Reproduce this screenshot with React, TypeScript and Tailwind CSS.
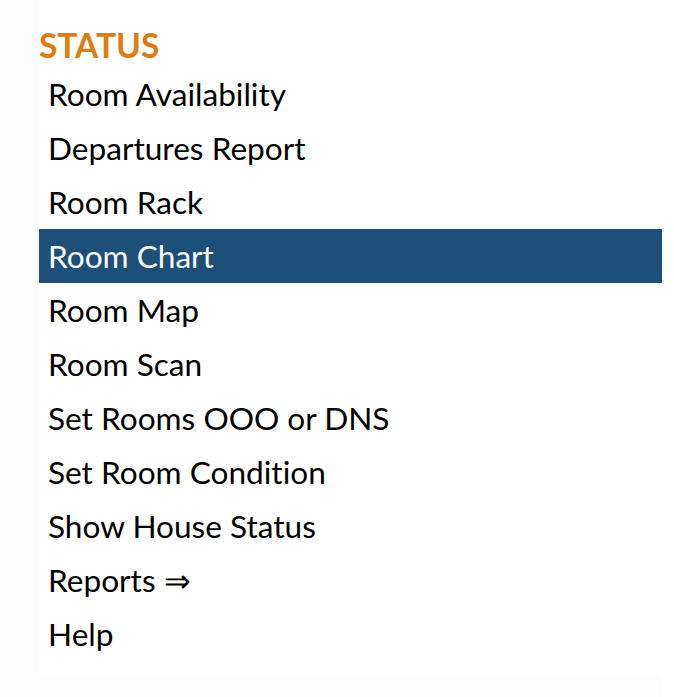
import React from 'react';

const items = [
  'Room Availability',
  'Departures Report',
  'Room Rack',
  'Room Chart',
  'Room Map',
  'Room Scan',
  'Set Rooms OOO or DNS',
  'Set Room Condition',
  'Show House Status',
  'Reports ⇒',
  'Help',
];

const App: React.FC = () => {
  return (
    <div className="min-h-[697px] w-[674px] bg-white font-['Lato',sans-serif] [font-variant-ligatures:none]">
      <div className="w-[662px] bg-[#fdfdfd] pb-[23px]">
        <div className="ml-[39px] w-[623px] bg-white pt-[23px] pb-[14px]">
          <h2 className="text-[33.5px] leading-[44px] font-bold text-[#e07b12]">STATUS</h2>
          <ul>
            {items.map((item) => (
              <li
                key={item}
                className={
                  item === 'Room Chart'
                    ? 'h-[54px] bg-[#1d4f79] pl-[9px] text-[31.6px] leading-[54px] text-white'
                    : 'h-[54px] pl-[9px] text-[31.6px] leading-[54px] text-black'
                }
              >
                {item}
              </li>
            ))}
          </ul>
        </div>
      </div>
    </div>
  );
};

export default App;
